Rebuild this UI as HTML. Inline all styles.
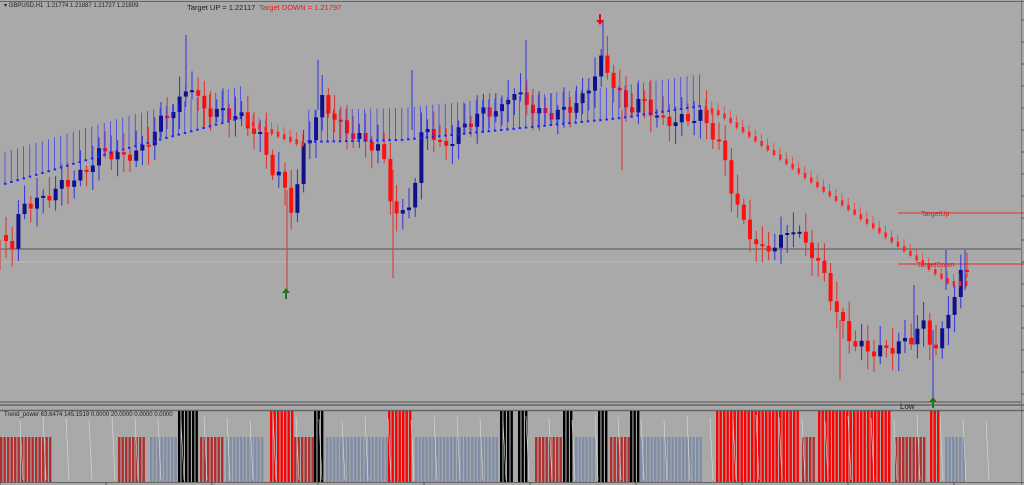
<!DOCTYPE html>
<html><head><meta charset="utf-8"><style>
body{margin:0;width:1024px;height:485px;overflow:hidden;background:#a9a9a9;font-family:"Liberation Sans",sans-serif}
svg{position:absolute;left:0;top:0}
.t{position:absolute;font-size:8px;color:#222;white-space:nowrap}
</style></head><body>
<svg id="s" width="1024" height="485" xmlns="http://www.w3.org/2000/svg">
<rect x="0" y="0" width="1024" height="485" fill="#a9a9a9"/>
<line x1="0" y1="249" x2="1022" y2="249" stroke="#555" stroke-width="1"/>
<line x1="0" y1="262" x2="1022" y2="262" stroke="#bbb" stroke-width="1"/>
<line x1="898" y1="213" x2="1024" y2="213" stroke="#e03030" stroke-width="1"/>
<line x1="898" y1="264" x2="1024" y2="264" stroke="#e03030" stroke-width="1"/>
<line x1="0" y1="402" x2="1022" y2="402" stroke="#555" stroke-width="1"/>
<line x1="0" y1="1.5" x2="1024" y2="1.5" stroke="#666"/>
<line x1="1021.5" y1="0" x2="1021.5" y2="485" stroke="#777"/>
<line x1="0" y1="405" x2="1024" y2="405" stroke="#666" stroke-width="1.5"/>
<line x1="0" y1="410.5" x2="1024" y2="410.5" stroke="#666" stroke-width="1.5"/>
<line x1="0" y1="482.5" x2="1024" y2="482.5" stroke="#666"/>
<g id="g"></g>
<path d="M286 288 l-4 5 h3 v6 h2 v-6 h3z" fill="#1a7a1a"/>
<path d="M933 397 l-4 5 h3 v6 h2 v-6 h3z" fill="#1a7a1a"/>
<path d="M600 25 l-4 -5 h3 v-6 h2 v6 h3z" fill="#e01010"/>
</svg>
<div class="t" style="left:4px;top:2px;font-size:6px">▾ GBPUSD,H1 &nbsp;1.21774 1.21887 1.21727 1.21809</div>
<div class="t" style="left:187px;top:3px;font-size:7.5px">Target UP = 1.22117</div>
<div class="t" style="left:259px;top:3px;font-size:7.5px;color:#e02020">Target DOWN = 1.21797</div>
<div class="t" style="left:921px;top:211px;font-size:7px;color:#e02020">TargetUp</div>
<div class="t" style="left:917px;top:262px;font-size:7px;color:#e02020">TargetDown</div>
<div class="t" style="left:900px;top:402px">Low</div>
<div class="t" style="left:4px;top:412px;font-size:6px">Trend_power 63.6474 145.1519 0.0000 20.0000 0.0000 0.0000</div>
<script>
(function(){
var NS='http://www.w3.org/2000/svg',g=document.getElementById('g');
function el(t,a){var e=document.createElementNS(NS,t);for(var k in a)e.setAttribute(k,String(a[k]));g.appendChild(e);}
function interp(p,x){for(var i=0;i<p.length-1;i++){if(x<=p[i+1][0]){var a=p[i],b=p[i+1];return a[1]+(b[1]-a[1])*(x-a[0])/(b[0]-a[0]);}}return p[p.length-1][1];}
var P=[[0,235],[10,245],[20,205],[40,200],[60,185],[80,175],[100,150],[120,158],[140,150],[160,120],[180,100],[188,80],[200,110],[220,112],[240,118],[260,140],[270,170],[280,180],[292,215],[300,150],[310,130],[320,100],[340,128],[360,140],[380,150],[392,215],[402,215],[412,190],[422,120],[440,150],[460,128],[480,112],[500,110],[510,88],[520,100],[540,115],[560,112],[580,100],[600,60],[610,80],[625,110],[640,100],[660,122],[680,120],[700,115],[720,150],[730,190],[742,225],[760,252],[780,240],[790,225],[800,240],[810,252],[820,270],[830,300],[840,325],[850,342],[870,352],[890,348],[910,338],[920,322],[932,350],[940,335],[950,300],[960,272]];
var M=[[0,185],[120,150],[240,118],[300,142],[400,140],[500,130],[620,118],[700,106],[720,112],[950,282]];
var prev=interp(P,0);
for(var x=4;x<966;x+=6.2){
 var c=interp(P,x)+Math.sin(x*0.7)*6;
 var up=c<prev;
 var tp=Math.min(c,prev),bt=Math.max(c,prev);if(bt-tp<2)bt=tp+2;
 var wt=tp-4-Math.abs(Math.sin(x*1.3))*16,wb=bt+4+Math.abs(Math.cos(x*0.9))*14;
 el('line',{x1:x+2,y1:wt.toFixed(1),x2:x+2,y2:wb.toFixed(1),stroke:up?'#3030e0':'#e03030','stroke-width':1});
 el('rect',{x:x.toFixed(1),y:tp.toFixed(1),width:4,height:(bt-tp).toFixed(1),fill:up?'#10108a':'#ff1010'});
 var m=interp(M,x),mp=interp(M,x-6),mu=m<mp,mc=mu?'#2020ff':'#ff2020';
 el('line',{x1:x+1,y1:(m-(mu?32:8)).toFixed(1),x2:x+1,y2:(m+(mu?0:6)).toFixed(1),stroke:mc,'stroke-width':0.7,opacity:0.85});
 el('rect',{x:x.toFixed(1),y:(m-1).toFixed(1),width:2.5,height:mu?2:5,fill:mc});
 prev=c;
}
var S=[[287,190,290,'#e03030'],[393,170,278,'#e03030'],[186,35,90,'#3030e0'],[526,40,100,'#3030e0'],[603,20,60,'#3030e0'],[840,320,380,'#e03030'],[933,330,400,'#3030e0'],[914,285,345,'#3030e0'],[946,250,290,'#3030e0'],[965,250,290,'#3030e0'],[318,60,110,'#3030e0'],[412,70,130,'#3030e0'],[622,110,170,'#e03030'],[0,240,270,'#e03030']];
S.forEach(function(s){el('line',{x1:s[0],y1:s[1],x2:s[0],y2:s[2],stroke:s[3],'stroke-width':1});});
var seg=[[0,50,'d'],[118,146,'d'],[150,176,'b'],[178,198,'k'],[200,222,'d'],[226,262,'b'],[270,293,'r'],[294,312,'d'],[314,323,'k'],[326,386,'b'],[388,410,'r'],[415,498,'b'],[500,511,'k'],[518,528,'k'],[535,560,'d'],[563,571,'k'],[575,596,'b'],[598,607,'k'],[610,629,'d'],[630,638,'k'],[640,702,'b'],[716,800,'r'],[802,816,'d'],[818,890,'r'],[895,926,'d'],[930,938,'r'],[945,966,'b']];
var C={d:'#b03030',b:'#7f8ea6',k:'#000',r:'#ff0000'};
seg.forEach(function(s){for(var x=s[0];x<s[1];x+=3.5){var full=(s[2]=='k'||s[2]=='r');
 el('rect',{x:x,y:full?411:437,width:2.4,height:full?71:45,fill:C[s[2]]});}});
for(var x=20;x<1000;x+=23){el('line',{x1:x,y1:415+(x%7),x2:x+3,y2:480,stroke:'#ddd','stroke-width':0.6});}
for(var y=20;y<400;y+=22){el('line',{x1:1021,y1:y,x2:1024,y2:y,stroke:'#555'});}
for(var x=0;x<1020;x+=106){el('line',{x1:x,y1:482,x2:x,y2:485,stroke:'#555'});}
})();
</script>
</body></html>
